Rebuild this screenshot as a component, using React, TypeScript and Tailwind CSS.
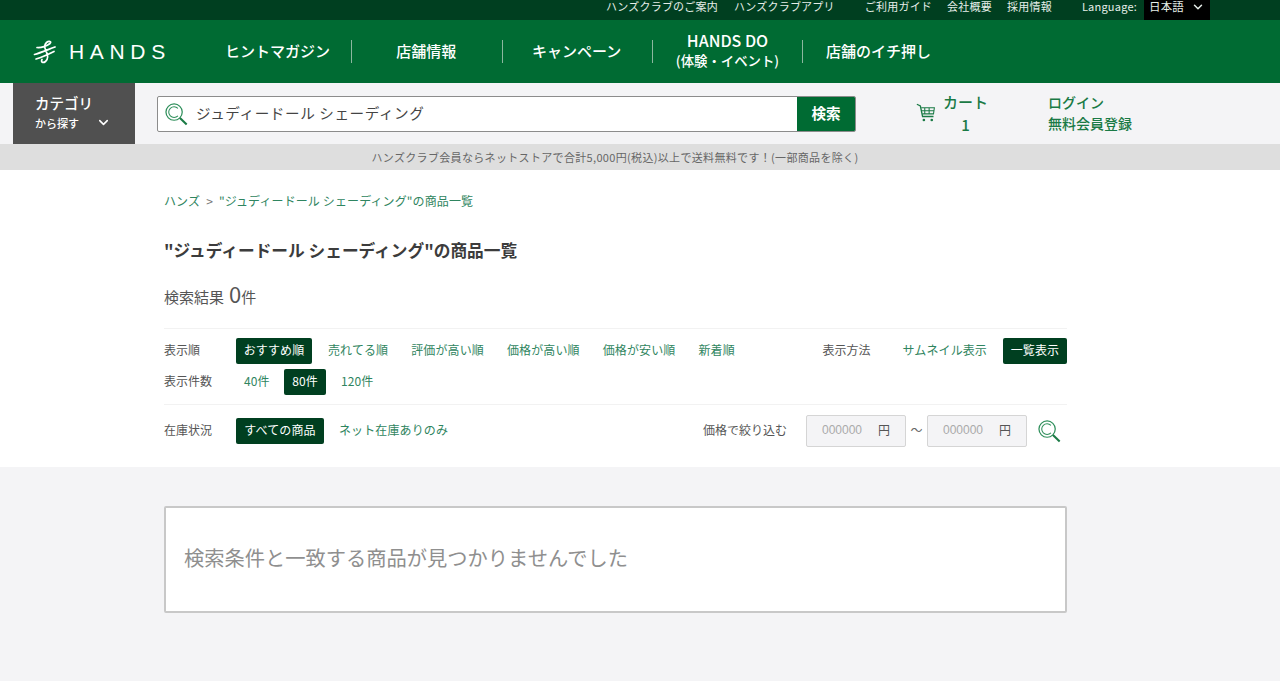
import { ChevronDown } from "lucide-react";

const font = { fontFamily: '"Noto Sans CJK JP", "Noto Sans", sans-serif' };

function Lens({ className }: { className: string }) {
  return (
    <svg viewBox="0 0 24 24" fill="none" className={className}>
      <circle cx="9.5" cy="9.5" r="8.5" stroke="#2f8f5b" strokeWidth="1.3" />
      <path d="M13.5 5.6A5.6 5.6 0 1 0 13.5 13.4" stroke="#2f8f5b" strokeWidth="1.1" />
      <path d="M15.6 15.6 22.6 22.4" stroke="#1a7a45" strokeWidth="2.2" />
    </svg>
  );
}

function Logo() {
  return (
    <svg viewBox="0 0 24 24" fill="none" className="h-[26px] w-[24px]">
      <path
        d="M4 7.5C8 8 14 6 17 3.5 19 1.5 16 .5 13.5 2.5 11 4.8 11.5 8 13 11 15 15 15.5 19 12.5 21.5 10 23.5 7.5 22 9 19.5M1.5 14.5C7 13 14 10 22 7M3 19C8 17.5 15 14.5 21 11.5"
        stroke="white"
        strokeWidth="1.7"
        strokeLinecap="round"
        strokeLinejoin="round"
      />
    </svg>
  );
}

function Cart() {
  return (
    <svg viewBox="0 0 24 24" fill="none" className="h-[22px] w-[21px]" stroke="#1a7a45" strokeWidth="1.5">
      <path d="M1 2 5 4 7.5 16H20" />
      <path d="M6 6H21L20 13H7.2M10 6V13M15 6V13M6.5 9.5H20.5" strokeWidth="1.2" />
      <circle cx="9" cy="20" r="1.5" fill="#1a7a45" stroke="none" />
      <circle cx="18" cy="20" r="1.5" fill="#1a7a45" stroke="none" />
    </svg>
  );
}

function Option({ label, active, className = "" }: { label: string; active?: boolean; className?: string }) {
  return active ? (
    <span className={`flex h-[26px] shrink-0 items-center justify-center whitespace-nowrap rounded-[2px] bg-[#003f20] pb-[2px] text-[12px] tracking-[0.01em] text-white ${className}`}>
      {label}
    </span>
  ) : (
    <span className={`flex h-[26px] shrink-0 items-center whitespace-nowrap pb-[2px] text-[12px] tracking-[0.01em] text-[#2f8560] ${className}`}>{label}</span>
  );
}

function PriceBox() {
  return (
    <div className="flex h-[32px] w-[100px] items-center justify-between rounded-[2px] border border-[#d5d5d5] bg-[#f4f4f6] pb-[2px] pl-[15px] pr-[15px] text-[12px]">
      <span className="text-[#aaa]" style={{ fontFamily: '"Liberation Sans", sans-serif' }}>000000</span>
      <span className="text-[#555]">円</span>
    </div>
  );
}

export default function App() {
  const navItems = ["ヒントマガジン", "店舗情報", "キャンペーン"];

  return (
    <div className="min-h-[681px] bg-[#f4f4f6]" style={font}>
      {/* top links */}
      <div className="flex h-[20px] items-start justify-end bg-[#003f20] pr-[70px] text-[11px] leading-[12px] tracking-[0.02em] text-[#e6eee9]">
        <span className="mr-4">ハンズクラブのご案内</span>
        <span className="mr-[30px]">ハンズクラブアプリ</span>
        <span className="mr-[15px]">ご利用ガイド</span>
        <span className="mr-[15px]">会社概要</span>
        <span className="mr-[30px]">採用情報</span>
        <span className="mr-[7px]">Language:</span>
        <span className="flex h-[20px] w-[66px] items-start justify-center gap-[7px] bg-black text-[11.5px] leading-[12px]">
          日本語 <ChevronDown size={14} strokeWidth={2.5} />
        </span>
      </div>

      {/* main nav */}
      <div className="flex h-[63px] items-center bg-[#006b33] text-white">
        <div className="ml-[33px] flex w-[191px] items-center gap-[12px]">
          <Logo />
          <span className="text-[21px] font-medium tracking-[0.27em]" style={{ fontFamily: '"Liberation Sans", sans-serif' }}>HANDS</span>
        </div>
        <div className="flex items-center text-[15px] font-medium">
          {navItems.map((item) => (
            <div key={item} className="flex h-[23px] w-[150.5px] items-center justify-center border-r border-[#8cb79f] pr-[1px] first:w-[128px] first:justify-start first:pl-[1px]">
              {item}
            </div>
          ))}
          <div className="flex h-[23px] w-[150px] flex-col items-center justify-center border-r border-[#8cb79f] pb-[3px] leading-[20px]">
            <span className="text-[16px]">HANDS DO</span>
            <span className="text-[13.4px]">(体験・イベント)</span>
          </div>
          <div className="pl-[23px]">店舗のイチ押し</div>
        </div>
      </div>

      {/* search row */}
      <div className="flex h-[61px] items-start">
        <div className="ml-[13px] flex h-[61px] w-[122px] flex-col justify-center bg-[#505050] pb-[2px] pl-[22px] font-medium text-white">
          <span className="text-[14.5px] leading-[20px]">カテゴリ</span>
          <span className="flex items-center gap-[17px] text-[11px] leading-[20px]">
            から探す <ChevronDown size={15} strokeWidth={2.5} />
          </span>
        </div>
        <div className="ml-[22px] mt-[13px] flex h-[36px] w-[699px] overflow-hidden rounded-[2px] border border-[#8c8c8c] bg-white">
          <div className="flex flex-1 items-center pl-[7px]">
            <Lens className="h-[23px] w-[23px]" />
            <span className="mb-[3px] ml-[8px] text-[14.6px] tracking-[0.04em] text-[#444]">ジュディードール シェーディング</span>
          </div>
          <div className="flex w-[58px] items-center justify-center bg-[#006b33] pb-[2px] text-[14.6px] font-bold text-white">検索</div>
        </div>
        <div className="ml-[60px] mt-[7px] flex items-center gap-[6px] font-medium text-[#1a7a45]">
          <Cart />
          <div className="flex flex-col items-center text-[15px] leading-[23px]">
            <span>カート</span>
            <span>1</span>
          </div>
        </div>
        <div className="ml-[60px] mt-[9px] flex flex-col text-[14px] font-medium leading-[21px] text-[#1a7a45]">
          <span>ログイン</span>
          <span>無料会員登録</span>
        </div>
      </div>

      {/* notice */}
      <div className="flex h-[26px] items-center justify-center bg-[#dedede] pr-[50px] text-[11px] tracking-[0.03em] text-[#666]">
        ハンズクラブ会員ならネットストアで合計5,000円(税込)以上で送料無料です！(一部商品を除く)
      </div>

      {/* results */}
      <div className="h-[297px] bg-white">
        <div className="ml-[164px] w-[903px] pt-[23px]">
          <div className="flex gap-[6px] text-[12px] leading-[16px] tracking-[0.01em] text-[#2f8560]">
            <span>ハンズ</span>
            <span className="text-[#777]">&gt;</span>
            <span>"ジュディードール シェーディング"の商品一覧</span>
          </div>
          <h1 className="mt-[29px] text-[16.7px] font-bold leading-[24px] text-[#3c3c3c]">"ジュディードール シェーディング"の商品一覧</h1>
          <p className="mt-[18px] flex items-baseline text-[15px] leading-[26px] text-[#555]">
            検索結果<span className="ml-[5px] text-[22px]">0</span>件
          </p>

          <div className="mt-[18px] border-t border-[#f2f2f2] pt-[9px]">
            <div className="flex items-center text-[12px] text-[#555]">
              <span className="w-[72px] pb-[2px]">表示順</span>
              <Option label="おすすめ順" active className="w-[76px]" />
              <Option label="売れてる順" className="ml-4" />
              <Option label="評価が高い順" className="ml-[23px]" />
              <Option label="価格が高い順" className="ml-[23px]" />
              <Option label="価格が安い順" className="ml-[23px]" />
              <Option label="新着順" className="ml-[23px]" />
              <span className="ml-auto w-[80px] shrink-0 pb-[2px]">表示方法</span>
              <Option label="サムネイル表示" />
              <Option label="一覧表示" active className="ml-4 w-[64px]" />
            </div>
            <div className="mt-[5px] flex items-center text-[12px] text-[#555]">
              <span className="w-[72px] pb-[2px]">表示件数</span>
              <Option label="40件" className="ml-2 w-[40px]" />
              <Option label="80件" active className="w-[42px]" />
              <Option label="120件" className="ml-[15px]" />
            </div>
          </div>

          <div className="mt-[9px] flex items-center border-t border-[#f2f2f2] pt-[10px]">
            <span className="w-[72px] pb-[2px] text-[12px] text-[#555]">在庫状況</span>
            <Option label="すべての商品" active className="w-[88px]" />
            <Option label="ネット在庫ありのみ" className="ml-[15px]" />
            <span className="ml-auto mr-[19px] pb-[2px] text-[12px] text-[#555]">価格で絞り込む</span>
            <PriceBox />
            <span className="mx-[4.5px] pb-[2px] text-[12px] text-[#666]">〜</span>
            <PriceBox />
            <Lens className="ml-[11px] mr-[6px] h-[23px] w-[23px]" />
          </div>
        </div>
      </div>

      {/* empty state */}
      <div className="ml-[164px] mt-[39px] flex h-[107px] w-[903px] items-center rounded-[2px] border-2 border-[#c8c8c8] bg-white pb-[2px] pl-[18px] text-[20.25px] text-[#8f8f8f]">
        検索条件と一致する商品が見つかりませんでした
      </div>
    </div>
  );
}
